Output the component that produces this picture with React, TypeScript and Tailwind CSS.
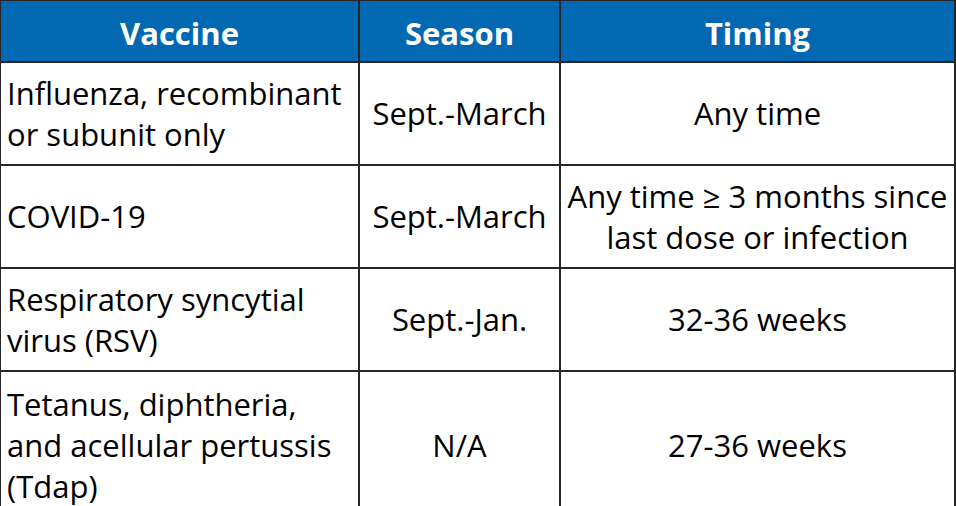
import React from "react";

const rows: { v: string; s: string; t: string; h: string }[] = [
  { v: "Influenza, recombinant or subunit only", s: "Sept.-March", t: "Any time", h: "h-[101px]" },
  { v: "COVID-19", s: "Sept.-March", t: "Any time ≥ 3 months since last dose or infection", h: "h-[101px]" },
  { v: "Respiratory syncytial virus (RSV)", s: "Sept.-Jan.", t: "32-36 weeks", h: "h-[101px]" },
  { v: "Tetanus, diphtheria, and acellular pertussis (Tdap)", s: "N/A", t: "27-36 weeks", h: "h-[146px]" },
];

export default function App() {
  return (
    <div className="w-[956px] h-[506px] overflow-hidden bg-white" style={{ fontFamily: '"Open Sans", sans-serif' }}>
      <div className="grid grid-cols-[357px_199px_393px] gap-[2px] bg-[#262626] pt-[1px] pl-[1px] pr-[2px] w-[956px]">
        {["Vaccine", "Season", "Timing"].map((h) => (
          <div key={h} className="h-[60px] pt-[4px] bg-[#0368b2] text-white font-bold text-[31px] flex items-center justify-center leading-none">
            {h}
          </div>
        ))}
        {rows.map((r) => (
          <React.Fragment key={r.v}>
            <div className={`${r.h} bg-white text-black text-[31px] leading-[41px] flex items-center pl-[6px] pr-1`}>
              <span>{r.v}</span>
            </div>
            <div className={`${r.h} bg-white text-black text-[31px] leading-[41px] flex items-center justify-center text-center`}>
              <span>{r.s}</span>
            </div>
            <div className={`${r.h} bg-white text-black text-[31px] leading-[41px] flex items-center justify-center text-center px-1`}>
              <span>{r.t}</span>
            </div>
          </React.Fragment>
        ))}
      </div>
    </div>
  );
}
